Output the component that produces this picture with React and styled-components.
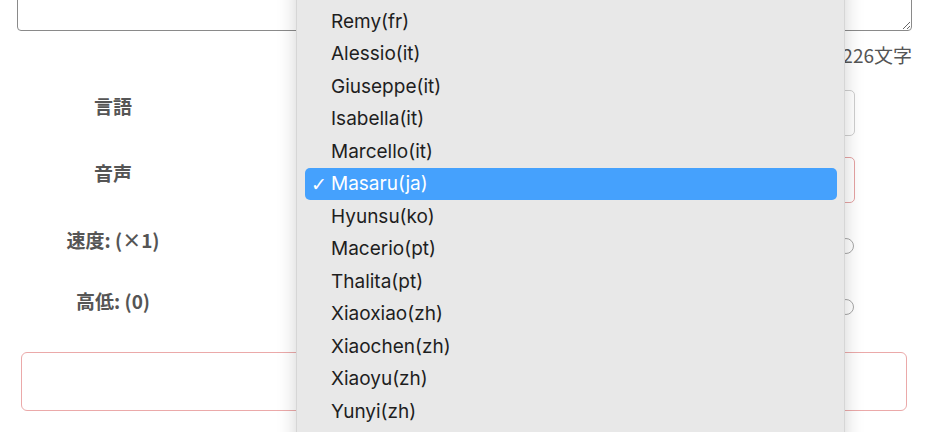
import styled, { createGlobalStyle } from 'styled-components';

const voices = [
  'Remy(fr)',
  'Alessio(it)',
  'Giuseppe(it)',
  'Isabella(it)',
  'Marcello(it)',
  'Masaru(ja)',
  'Hyunsu(ko)',
  'Macerio(pt)',
  'Thalita(pt)',
  'Xiaoxiao(zh)',
  'Xiaochen(zh)',
  'Xiaoyu(zh)',
  'Yunyi(zh)',
];

const selected = 'Masaru(ja)';

const App = () => {
  return (
    <Root>
      <GlobalStyle />
      <Page>
        <TextArea defaultValue="" />
        <Counter>226文字</Counter>

        <Row>
          <Label>言語</Label>
          <Control>
            <SelectBox />
          </Control>
        </Row>
        <Row>
          <Label>音声</Label>
          <Control>
            <SelectBox $invalid />
          </Control>
        </Row>
        <Row $slider>
          <Label>速度: (×1)</Label>
          <Control>
            <Track>
              <Thumb />
            </Track>
          </Control>
        </Row>
        <Row $slider>
          <Label>高低: (0)</Label>
          <Control>
            <Track>
              <Thumb />
            </Track>
          </Control>
        </Row>

        <OutputBox />
      </Page>

      <Menu>
        {voices.map(v => (
          <MenuItem key={v} $active={v === selected}>
            <Check>{v === selected ? '✓' : ''}</Check>
            {v}
          </MenuItem>
        ))}
      </Menu>
    </Root>
  );
};

// スタイル定義
const GlobalStyle = createGlobalStyle`
  html, body {
    margin: 0;
    background: #fff;
    overflow: hidden;
  }
  body {
    font-family: "Noto Sans CJK JP", "Noto Sans", sans-serif;
  }
`;

const Root = styled.div`
  position: relative;
  width: 930px;
  height: 432px;
  overflow: hidden;
`;

const Page = styled.div`
  padding: 0 18px 0 17px;
  display: flex;
  flex-direction: column;
`;

const TextArea = styled.textarea`
  display: block;
  box-sizing: border-box;
  width: 100%;
  height: 51px;
  margin-top: -20px;
  border: 1px solid #8a8a8a;
  border-radius: 4px;
  background: #fff;
`;

const Counter = styled.div`
  margin-top: 10px;
  text-align: right;
  font-size: 19px;
  line-height: 28px;
  color: #555;
`;

const Row = styled.div`
  display: grid;
  grid-template-columns: 192px 1fr;
  margin-top: 21px;
  height: ${({ $slider }) => ($slider ? '40px' : '46px')};
`;

const Label = styled.div`
  text-align: center;
  font-weight: 700;
  font-size: 19px;
  line-height: 28px;
  padding-top: 2px;
  color: #555;
`;

const Control = styled.div`
  padding-right: 57px;
  padding-left: 110px;
`;

const SelectBox = styled.div`
  box-sizing: border-box;
  height: 46px;
  border: 1px solid ${({ $invalid }) => ($invalid ? '#e6a3a3' : '#cfcfcf')};
  border-radius: 5px;
  background: #fff;
`;

const Track = styled.div`
  height: 40px;
  display: flex;
  align-items: flex-start;
  justify-content: flex-end;
`;

const Thumb = styled.div`
  box-sizing: border-box;
  width: 16px;
  height: 16px;
  margin-top: 14px;
  margin-right: 1px;
  border-radius: 50%;
  border: 1.5px solid #a8a8a8;
  background: #fff;
`;

const OutputBox = styled.div`
  box-sizing: border-box;
  height: 59px;
  margin: 27px 5px 0 4px;
  border: 1px solid #eba9a9;
  border-radius: 6px;
`;

const Menu = styled.div`
  position: absolute;
  left: 296px;
  top: -20px;
  width: 549px;
  height: 480px;
  box-sizing: border-box;
  padding: 25px 7px 0 8px;
  background: #e8e8e8;
  border-left: 1px solid #d6d6d6;
  border-right: 1px solid #d6d6d6;
  box-shadow: 0 0 18px rgba(0, 0, 0, 0.18);
`;

const MenuItem = styled.div`
  display: flex;
  align-items: center;
  height: 32.5px;
  border-radius: 5px;
  font-family: Inter, "Liberation Sans", sans-serif;
  font-size: 19px;
  color: ${({ $active }) => ($active ? '#fff' : '#1e1e1e')};
  background: ${({ $active }) => ($active ? '#45a1fd' : 'transparent')};
`;

const Check = styled.span`
  display: inline-block;
  width: 26px;
  text-align: right;
  padding-right: 4px;
  box-sizing: border-box;
  font-family: "DejaVu Sans", sans-serif;
  font-size: 19px;
  font-weight: 700;
`;

export default App;
